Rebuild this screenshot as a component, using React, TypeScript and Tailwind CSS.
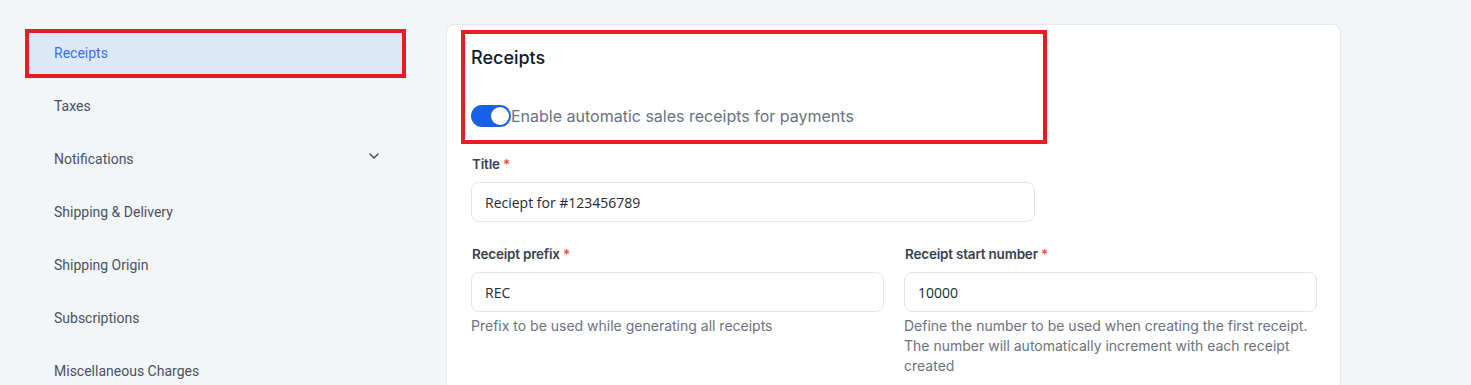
import { ChevronDown } from "lucide-react";

const navItems = [
  { label: "Receipts", active: true },
  { label: "Taxes" },
  { label: "Notifications", expandable: true },
  { label: "Shipping & Delivery" },
  { label: "Shipping Origin" },
  { label: "Subscriptions" },
  { label: "Miscellaneous Charges" },
];

function Label({ children }: { children: React.ReactNode }) {
  return (
    <label className="block pl-[1px] text-[13.5px] leading-5 font-semibold tracking-[-0.2px] text-[#374151]">
      {children} <span className="text-[#ef4444]">*</span>
    </label>
  );
}

function TextInput({ value }: { value: string }) {
  return (
    <div className="mt-[8px] flex h-[40px] items-center rounded-lg border border-[#e2e4ea] bg-white px-[13px] text-[14px] text-[#1f2937] [font-family:'Open_Sans',sans-serif]">
      {value}
    </div>
  );
}

export default function App() {
  return (
    <div className="min-h-[385px] overflow-hidden bg-[#f2f6f9] font-['Inter',sans-serif]">
      <div className="flex gap-[44px] pl-[29px] pt-[24px]">
        <nav className="mt-[9px] w-[373px] shrink-0 font-['Roboto',sans-serif] text-[14px]">
          {navItems.map((item) => (
            <div
              key={item.label}
              className={
                item.active
                  ? "flex h-[41px] items-center justify-between bg-[#dce8f8] pl-[25px] text-[#3470e4] outline-4 outline-[#e81c22]"
                  : "mt-[12px] flex h-[41px] items-center justify-between pl-[25px] pr-[20px] text-[#4b5160]"
              }
            >
              <span>{item.label}</span>
              {item.expandable && (
                <ChevronDown size={16} strokeWidth={2} className="-mt-[8px] text-[#374151]" />
              )}
            </div>
          ))}
        </nav>

        <div className="w-[895px] shrink-0 rounded-lg border border-[#e5e7eb] bg-white pl-[24px] pr-[23px] pt-[5px] pb-10 shadow-[0_1px_2px_rgba(0,0,0,0.04)]">
          <div className="-ml-[10px] w-[586px] border-4 border-[#e81c22] pl-[6px] pt-[10px] pb-[12px]">
            <h2 className="text-[18px] leading-7 font-medium text-[#111827]">Receipts</h2>
            <div className="mt-[32px] flex items-center">
              <div className="flex h-[22px] w-[40px] items-center justify-end rounded-full bg-[#1a5fe8] p-[2px]">
                <div className="h-[18px] w-[18px] rounded-full bg-white" />
              </div>
              <span className="text-[16px] leading-6 text-[#687280]">
                Enable automatic sales receipts for payments
              </span>
            </div>
          </div>

          <div className="mt-[10px] w-[564px]">
            <Label>Title</Label>
            <TextInput value="Reciept for #123456789" />
          </div>

          <div className="mt-[22px] grid w-[846px] grid-cols-2 gap-x-[20px]">
            <div>
              <Label>Receipt prefix</Label>
              <TextInput value="REC" />
              <p className="mt-[4px] text-[14px] leading-5 text-[#6b7280]">
                Prefix to be used while generating all receipts
              </p>
            </div>
            <div>
              <Label>Receipt start number</Label>
              <TextInput value="10000" />
              <p className="mt-[4px] text-[14px] leading-5 text-[#6b7280]">
                Define the number to be used when creating the first receipt. The number will
                automatically increment with each receipt created
              </p>
            </div>
          </div>
        </div>
      </div>
    </div>
  );
}
